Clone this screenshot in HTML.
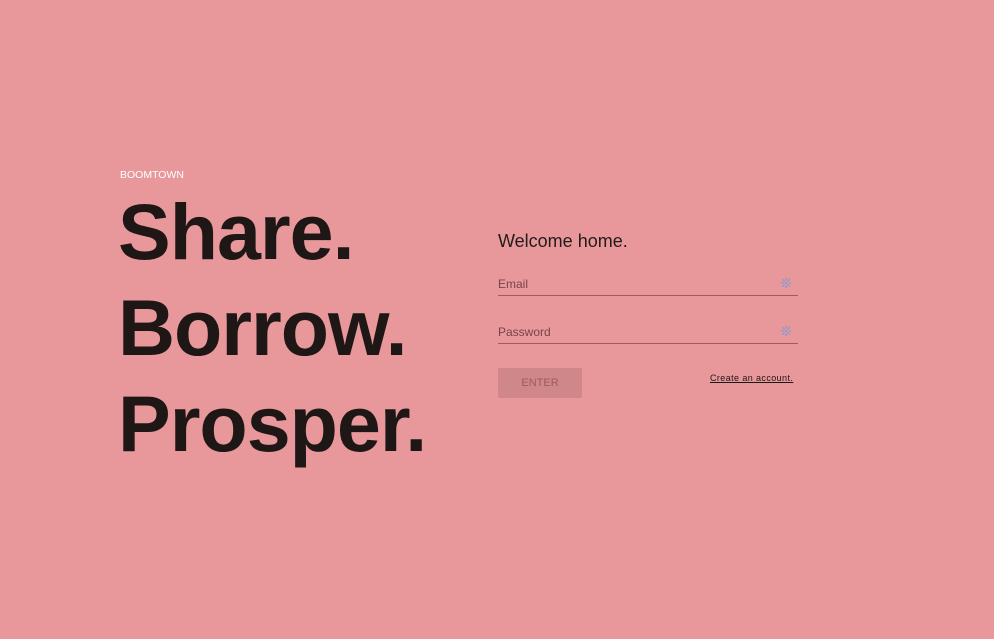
<!DOCTYPE html>
<html><head><style>
html,body{margin:0;padding:0;width:994px;height:639px;background:#e8989b;overflow:hidden;font-family:"Liberation Sans",Arial,sans-serif;}
.brand{position:absolute;left:120px;top:169px;font-size:10.5px;color:#fff;letter-spacing:0}
.h{position:absolute;left:118px;font-size:79px;font-weight:bold;color:#1e1716;letter-spacing:-1px;line-height:1;white-space:nowrap}
.wel{position:absolute;left:498px;top:231px;font-size:18px;color:#231a1a}
.field{position:absolute;left:498px;width:300px;height:20px;border-bottom:1px solid #a0595c}
.field span{position:absolute;left:0;top:2px;font-size:12px;color:#7a4446}
.field i{position:absolute;right:6px;top:0px;font-style:normal;font-size:14px;color:#7f9ad6}
.btn{position:absolute;left:498px;top:368px;width:84px;height:30px;background:#d0878a;border-radius:2px;color:#a0595c;font-size:11px;text-align:center;line-height:30px}
.create{position:absolute;left:710px;top:373px;font-size:9px;color:#1e1716;text-decoration:underline;letter-spacing:.4px}
</style></head><body>
<div class="brand">BOOMTOWN</div>
<div class="h" style="top:192px">Share.</div>
<div class="h" style="top:288px">Borrow.</div>
<div class="h" style="top:384px">Prosper.</div>
<div class="wel">Welcome home.</div>
<div class="field" style="top:275px"><span>Email</span><i>❊</i></div>
<div class="field" style="top:323px"><span>Password</span><i>❊</i></div>
<div class="btn">ENTER</div>
<div class="create">Create an account.</div>
</body></html>
